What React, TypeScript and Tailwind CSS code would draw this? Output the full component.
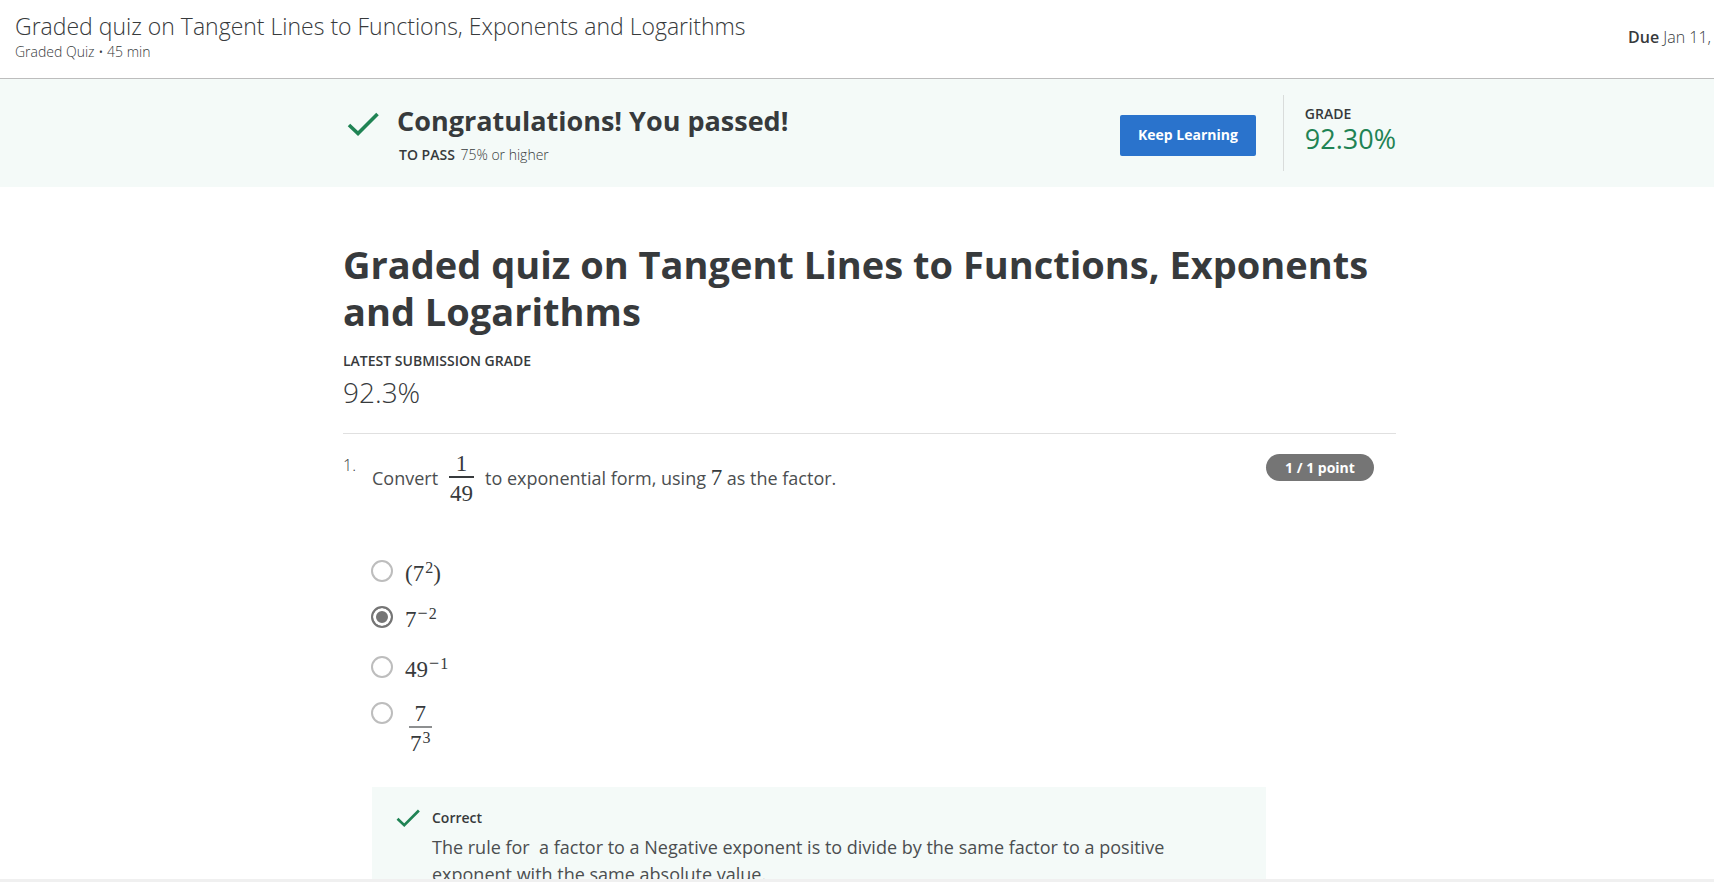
import type { ReactNode } from "react";

function Check({ className }: { className: string }) {
  return (
    <svg viewBox="0 0 32 24" fill="none" className={className} aria-hidden="true">
      <path d="M2 13 L11 21.5 L30.5 2" stroke="#1f8354" strokeWidth="3.6" />
    </svg>
  );
}

function MathText({ children }: { children: ReactNode }) {
  return (
    <span className="font-['Liberation_Serif',serif] text-[23px] leading-6 text-[#373a3c]">
      {children}
    </span>
  );
}

function Sup({ children }: { children: ReactNode }) {
  return <sup className="ml-px text-base leading-none">{children}</sup>;
}

function Minus() {
  return <span className="mr-px text-lg leading-none">−</span>;
}

function Fraction({ top, bottom, bar }: { top: ReactNode; bottom: ReactNode; bar: string }) {
  return (
    <span className="inline-flex flex-col items-center">
      <span>{top}</span>
      <span className={`w-full ${bar}`} />
      <span className="px-px pt-1">{bottom}</span>
    </span>
  );
}

const options: { id: string; row: string; label: ReactNode }[] = [
  { id: "a", row: "h-[46px]", label: <>(7<Sup>2</Sup>)</> },
  { id: "b", row: "h-[50px]", label: <>7<Sup><Minus />2</Sup></> },
  { id: "c", row: "h-[46px]", label: <>49<Sup><Minus />1</Sup></> },
  {
    id: "d",
    row: "h-[64px]",
    label: <Fraction top="7" bottom={<>7<Sup>3</Sup></>} bar="h-[2px] bg-[#8d8f90]" />,
  },
];

export default function App() {
  return (
    <div className="flex h-screen flex-col overflow-hidden bg-white font-['Open_Sans',sans-serif] text-[#373a3c]">
      <header className="flex shrink-0 items-start justify-between border-b border-[#bdbdbd] pt-[11px] pr-[3px] pb-4 pl-[15px]">
        <div>
          <p className="text-[23px] leading-[30px] font-light">
            Graded quiz on Tangent Lines to Functions, Exponents and Logarithms
          </p>
          <p className="mt-px text-sm leading-5 font-light">Graded Quiz • 45 min</p>
        </div>
        <p className="pt-3.5 text-base leading-6 font-light whitespace-nowrap">
          <strong className="font-semibold">Due</strong> Jan 11,
        </p>
      </header>

      <section className="shrink-0 bg-[#f4faf8] pl-[25px]">
        <div className="mx-auto flex h-[108px] max-w-[1053px] items-center">
          <Check className="mb-[18px] ml-1 h-6 w-8 shrink-0" />
          <div className="ml-[18px] flex-1 pt-0.5">
            <h2 className="text-[27px] leading-9 font-bold">Congratulations! You passed!</h2>
            <p className="mt-1.5 pl-0.5 text-sm leading-5 font-light">
              <strong className="mr-0.5 font-semibold">TO PASS</strong> 75% or higher
            </p>
          </div>
          <button className="mt-1 h-[41px] rounded-xs bg-[#2a73cc] px-[18px] text-sm font-bold text-white">
            Keep Learning
          </button>
          <div className="ml-[27px] h-[76px] border-l border-[#d9dcdb] pt-[9px] pl-[21px]">
            <p className="text-sm leading-5 font-semibold">GRADE</p>
            <p className="text-[27px] leading-[30px] text-[#1f8354]">92.30%</p>
          </div>
        </div>
      </section>

      <main className="min-h-0 flex-1 overflow-hidden pl-[25px]">
        <div className="mx-auto max-w-[1053px] pt-[54px]">
          <h1 className="text-[38px] leading-[47px] font-bold">
            Graded quiz on Tangent Lines to Functions, Exponents and Logarithms
          </h1>
          <p className="mt-4 text-sm leading-5 font-semibold">LATEST SUBMISSION GRADE</p>
          <p className="mt-[3px] text-[28px] leading-9 font-light">92.3%</p>

          <section className="mt-[23px] flex items-start border-t border-[#e0e0e0] pt-5">
            <span className="w-[29px] shrink-0 text-base leading-[22px] font-light">1.</span>
            <div className="flex-1">
              <p className="flex h-12 items-center text-lg leading-[26px] text-[#4b4e50]">
                Convert
                <span className="mx-[11px] inline-flex pt-0.5">
                  <MathText>
                    <Fraction top="1" bottom="49" bar="h-[2px] bg-[#373a3c]" />
                  </MathText>
                </span>
                <span className="pb-px">
                  to exponential form, using <MathText>7</MathText> as the factor.
                </span>
              </p>

              <fieldset aria-label="Answer" className="mt-[58px] -ml-px">
                {options.map((o) => (
                  <label key={o.id} className={`flex items-start ${o.row}`}>
                    <input
                      type="radio"
                      name="answer"
                      defaultChecked={o.id === "b"}
                      className="size-[22px] shrink-0 appearance-none rounded-full border-2 border-[#bdbdbd] bg-white checked:border-[#757575] checked:bg-[#757575] checked:shadow-[inset_0_0_0_3px_white]"
                    />
                    <span className={o.id === "d" ? "ml-4" : "ml-3 pt-0.5"}>
                      <MathText>{o.label}</MathText>
                    </span>
                  </label>
                ))}
              </fieldset>

              <div className="mt-[21px] flex items-start bg-[#f4faf8] px-6 pt-[21px] pb-6">
                <Check className="mt-px h-[18px] w-6 shrink-0" />
                <div className="ml-3">
                  <p className="text-sm leading-5 font-semibold">Correct</p>
                  <p className="mt-1.5 pr-5 text-lg leading-[27px] text-[#4b4e50]">
                    The rule for &nbsp;a factor to a Negative exponent is to divide by the same factor to a
                    positive exponent with the same absolute value.
                  </p>
                </div>
              </div>
            </div>
            <div className="flex w-[130px] shrink-0">
              <span className="h-[27px] w-[108px] rounded-full bg-[#757575] text-center text-sm leading-[27px] font-bold text-white">
                1 / 1 point
              </span>
            </div>
          </section>
        </div>
      </main>

      <div className="h-[3px] shrink-0 bg-[#f0f0f0]" />
    </div>
  );
}
